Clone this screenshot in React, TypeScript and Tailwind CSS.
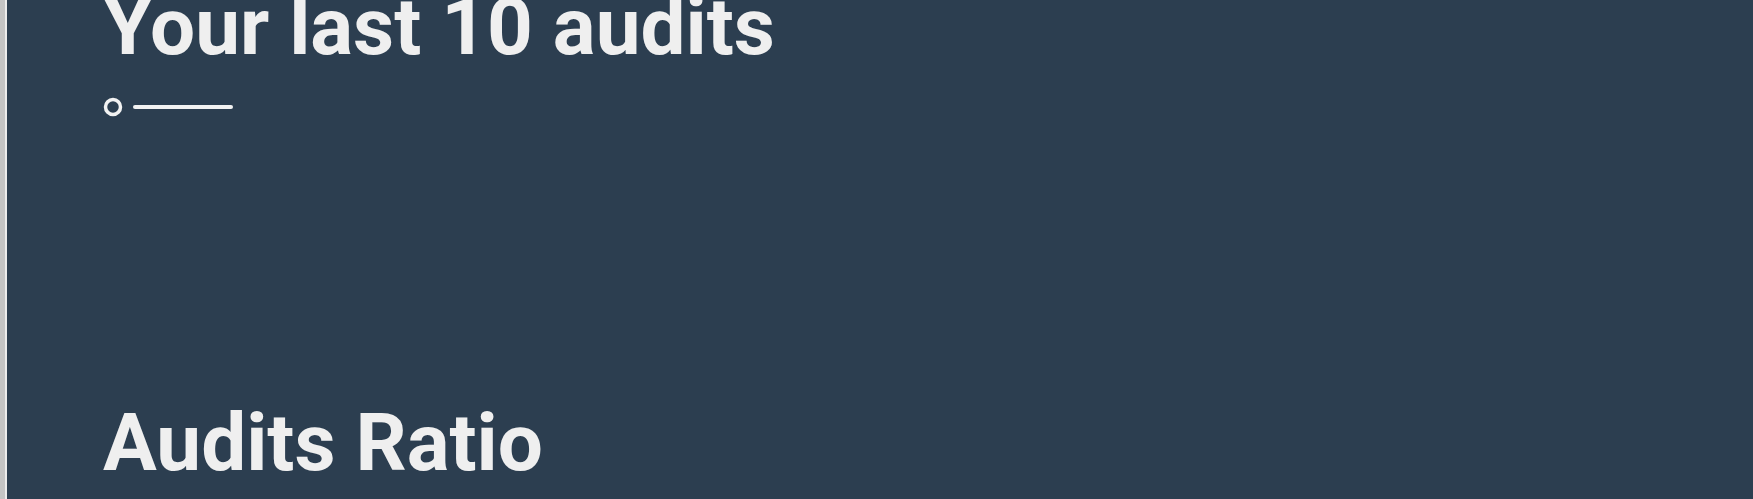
import React from "react";

export default function App() {
  return (
    <div className="flex h-screen w-full overflow-hidden bg-[#c4c4c4]" style={{ fontFamily: "Roboto, 'Liberation Sans', sans-serif" }}>
      <div className="w-[5px] shrink-0 bg-[#c4c4c4]" />
      <div className="flex-1 border-l-2 border-[#ececec] bg-[#2c3e50] pl-[96px] text-[#efefef]">
        <h2 className="-mt-[13px] h-[80px] text-[80px] font-bold leading-[80px] whitespace-nowrap">Your last 10 audits</h2>
        <div className="mt-[30px] h-[20px]">
          <svg width="140" height="20" viewBox="0 0 140 20">
            <circle cx="10" cy="10" r="7.5" fill="none" stroke="#f2f2f2" strokeWidth="3.5" />
            <line x1="32" y1="10" x2="128" y2="10" stroke="#f2f2f2" strokeWidth="4" strokeLinecap="round" />
          </svg>
        </div>
        <h2 className="mt-[286px] h-[80px] text-[80px] font-bold leading-[80px] whitespace-nowrap">Audits Ratio</h2>
      </div>
    </div>
  );
}
